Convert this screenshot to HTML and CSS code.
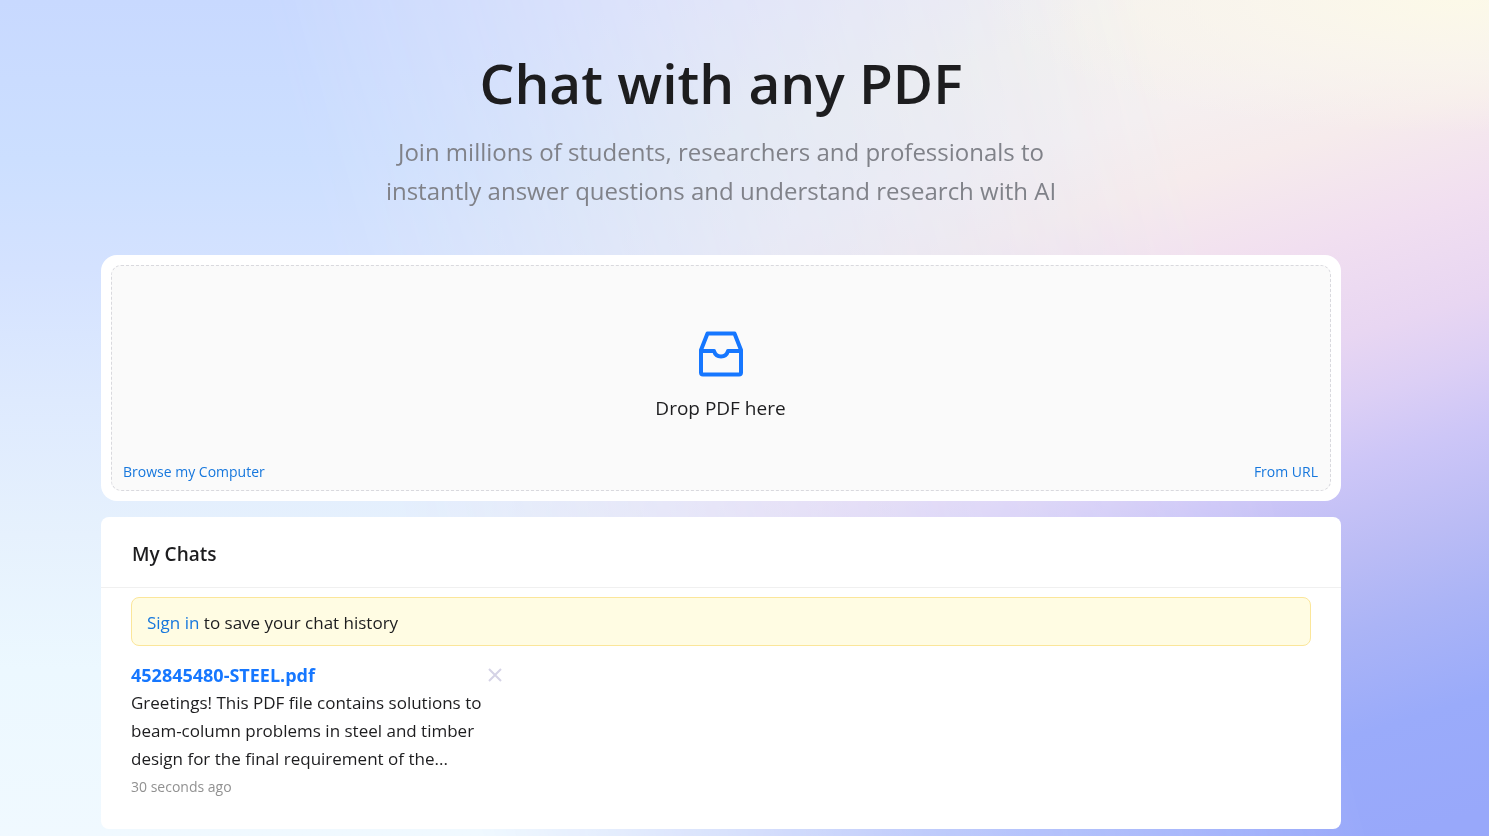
FILE: index.html
```html
<!DOCTYPE html>
<html lang="en">
  <head>
    <meta charset="UTF-8">
    <meta name="viewport" content="width=device-width, initial-scale=1">
    <title>Chat with any PDF</title>
    <link rel="stylesheet" href="styles.css">
  </head>
  <body>
    <main class="container">
      <header class="hero">
        <h1 class="hero-title">Chat with any PDF</h1>
        <p class="hero-text">Join millions of students, researchers and professionals to instantly answer questions and understand research with AI</p>
      </header>

      <section class="upload">
        <div class="dropzone">
          <div class="drop-center">
            <svg class="inbox" viewBox="0 0 48 48" fill="none" stroke="#1677ff" stroke-width="4" stroke-linejoin="round" aria-hidden="true">
              <path d="M10.500 3.500H37.500L44 20V42.500Q44 44.500 42 44.500H6Q4 44.500 4 42.500V20Z"/>
              <path d="M4 21H17C18 24.500 20.500 26.500 24 26.500S30 24.500 31 21H44"/>
            </svg>
            <p class="drop-text">Drop PDF here</p>
          </div>
          <div class="drop-actions">
            <button class="link-button" type="button">Browse my Computer</button>
            <button class="link-button" type="button">From URL</button>
          </div>
        </div>
      </section>

      <section class="chats">
        <h2 class="chats-title">My Chats</h2>
        <div class="chats-body">
          <div class="notice"><a href="#">Sign in</a> to save your chat history</div>
          <article class="chat">
            <div class="chat-head">
              <a class="chat-name" href="#">452845480-STEEL.pdf</a>
              <button class="chat-close" type="button" aria-label="Delete chat">
                <svg viewBox="0 0 14 14" fill="none" stroke="#d5d3e6" stroke-width="2" aria-hidden="true">
                  <path d="M1 1L13 13M13 1L1 13"/>
                </svg>
              </button>
            </div>
            <p class="chat-text">Greetings! This PDF file contains solutions to beam-column problems in steel and timber design for the final requirement of the...</p>
            <p class="chat-time">30 seconds ago</p>
          </article>
        </div>
      </section>
    </main>
  </body>
</html>
```

FILE: styles.css
```css
* {
  box-sizing: border-box;
}
html {
  min-height: 100%;
  background: linear-gradient(#c8d9ff 0%, #ccdfff 19%, #d4e2ff 32%, #deeafe 48%, #e6f1fd 64%, #ecf8ff 80%, #f0f9ff 100%);
}
body {
  margin: 0;
  padding: 51px 148px 7px 101px;
  color: #1d1d1f;
  font-family: "Segoe UI", "Open Sans", "Noto Sans", sans-serif;
  font-size: 16px;
}
/* warm side of the backdrop, faded out towards the left */
body::before {
  content: "";
  position: fixed;
  inset: 0;
  z-index: -1;
  background:
    radial-gradient(ellipse 32% 16% at 98% 0%, #fcf9e8 0%, rgba(250, 246, 236, 0.8) 45%, rgba(245, 240, 240, 0) 100%),
    linear-gradient(163deg, #f0ecf7 15%, #f4f1ee 28%, #f5eff0 36%, #f6ebec 42%, #f1dff0 50%, #e8d6f2 58%, #dccff5 63%, #cdc6f7 68%, #bbbcf5 75%, #abb4f6 81%, #9aabfa 89%, #98a8fa 98%);
  mask-image: linear-gradient(75deg, transparent 28%, rgba(0, 0, 0, 0.6) 54%, rgba(0, 0, 0, 0.8) 68%, black 80%);
}
h1, h2, p {
  margin: 0;
}
a {
  color: #1677dd;
  text-decoration: none;
}
button {
  padding: 0;
  border: none;
  background: none;
  font-family: inherit;
  cursor: pointer;
}
.container {
  max-width: 1240px;
  margin: 0 auto;
}

.hero {
  padding-bottom: 45px;
  text-align: center;
}
.hero-title {
  font-size: 55px;
  font-weight: 600;
  line-height: 64px;
}
.hero-text {
  max-width: 680px;
  margin: 17px auto 0;
  color: #808289;
  font-size: 24px;
  line-height: 39px;
}

.upload {
  padding: 10px;
  border-radius: 16px;
  background: white;
}
.dropzone {
  display: flex;
  flex-direction: column;
  padding: 64px 12px 7px 11px;
  border: 1px dashed #d9d9de;
  border-radius: 10px;
  background: #fafafa;
}
.drop-center {
  display: flex;
  flex-direction: column;
  align-items: center;
  gap: 15px;
}
.inbox {
  width: 48px;
  height: 48px;
}
.drop-text {
  font-size: 19px;
  line-height: 30px;
}
.drop-actions {
  display: flex;
  justify-content: space-between;
  margin-top: 38px;
}
.link-button {
  color: #1677dd;
  font-size: 14px;
  line-height: 22px;
}

.chats {
  margin-top: 16px;
  border-radius: 8px;
  background: white;
}
.chats-title {
  padding: 22px 31px 18px;
  border-bottom: 1px solid #f0f0f0;
  font-size: 19px;
  font-weight: 600;
  line-height: 30px;
}
.chats-body {
  padding: 9px 30px 29px;
}
.notice {
  padding: 11px 15px 9px;
  border: 1px solid #fbe69a;
  border-radius: 8px;
  background: #fffce3;
  font-size: 17px;
  line-height: 27px;
}
.chat {
  max-width: 371px;
  margin-top: 15px;
}
.chat-head {
  display: flex;
  align-items: center;
  justify-content: space-between;
}
.chat-name {
  color: #1677ff;
  font-size: 18px;
  font-weight: 700;
  line-height: 28px;
}
.chat-close {
  width: 14px;
  height: 14px;
}
.chat-close svg {
  display: block;
}
.chat-text {
  max-width: 364px;
  font-size: 17px;
  line-height: 28px;
}
.chat-time {
  color: #919191;
  font-size: 14px;
  line-height: 27px;
}
```
